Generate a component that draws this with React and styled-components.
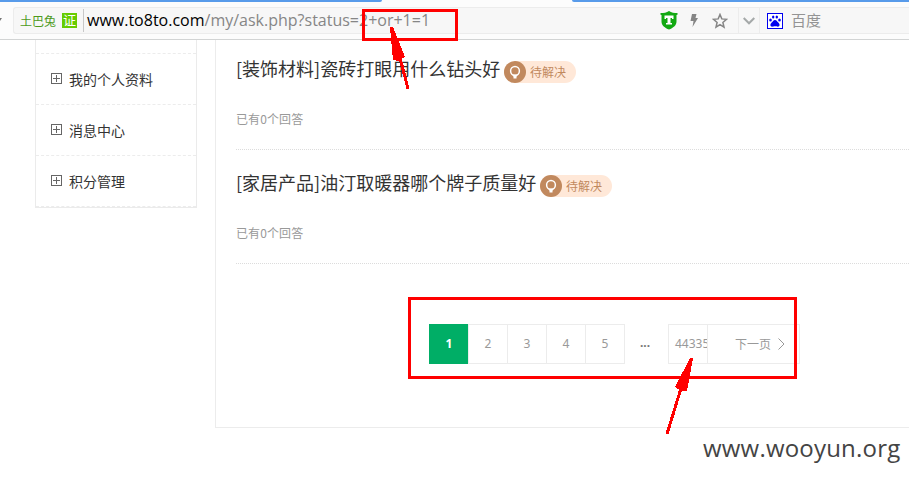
import React from "react";
import styled, { createGlobalStyle } from "styled-components";

const Global = createGlobalStyle`
  * { box-sizing: border-box; }
  html, body { margin: 0; background: #fff; overflow: hidden; }
  body { font-family: "Liberation Sans", "Noto Sans CJK SC", sans-serif; }
`;

const cjk = `"Noto Sans CJK SC", sans-serif`;
const latin = `"Open Sans", "Noto Sans", sans-serif`;

const Page = styled.div`
  position: relative;
  width: 909px;
  height: 477px;
  overflow: hidden;
  display: flex;
  flex-direction: column;
`;

const Browser = styled.header`
  flex: none;
  height: 40px;
  display: flex;
  flex-direction: column;
  background: #fcfcfc;
  border-bottom: 1px solid #d2d4d4;
`;

const Tabs = styled.div`
  height: 2px;
  display: flex;
  justify-content: space-between;
`;

const TabStrip = styled.div`
  width: ${(p) => p.$width}px;
  background: #589bea;
  border-radius: ${(p) => (p.$end ? "0 0 3px 0" : "0 0 0 3px")};
`;

const Tools = styled.div`
  display: flex;
  margin-top: 5px;
  height: 27px;
`;

const BackArrow = styled.div`
  width: 13px;
  padding-top: 10px;
  line-height: 0;
`;

const Address = styled.div`
  flex: 1;
  display: flex;
  align-items: center;
  background: #f7f7f7;
  border: 1px solid #ececec;
  border-right: 0;
  border-radius: 3px 0 0 3px;
`;

const SiteName = styled.span`
  width: 42px;
  margin-left: 6px;
  font: 12px/24px ${cjk};
  color: #4d9a1c;
`;

const Cert = styled.span`
  width: 15px;
  height: 15px;
  background: #66cc00;
  color: #fff;
  font: 13px/14px ${cjk};
  text-align: center;
`;

const Caret = styled.i`
  width: 1px;
  height: 23px;
  margin: 0 3px 0 6px;
  background: #c8c8c8;
`;

const Url = styled.span`
  flex: 1;
  font: 16px/25px ${latin};
  color: #868686;
  white-space: nowrap;
`;

const Host = styled.span`
  color: #000;
`;

const Icons = styled.div`
  display: flex;
  align-items: center;
  width: 78px;
`;

const Slot = styled.span`
  flex: none;
  display: flex;
  justify-content: center;
  width: ${(p) => p.$w}px;
`;

const Dropdown = styled.div`
  width: 22px;
  height: 25px;
  display: flex;
  align-items: center;
  justify-content: center;
  border: solid #ececec;
  border-width: 0 1px;
`;

const Engine = styled.div`
  width: 149px;
  display: flex;
  align-items: center;
  padding-left: 7px;
  gap: 8px;
  font: 15px/24px ${cjk};
  color: #949494;
  span { margin-top: -1px; }
`;

const Content = styled.main`
  flex: 1;
  min-height: 0;
  display: flex;
  align-items: flex-start;
  padding-left: 35px;
`;

const Sidebar = styled.nav`
  width: 162px;
  height: 168px;
  border: 1px solid #ebebeb;
  border-top: 0;
  padding-top: 13px;
`;

const MenuItem = styled.div`
  height: 51px;
  display: flex;
  align-items: center;
  gap: 7px;
  padding-left: 15px;
  border-top: 1px dashed #ececec;
  font: 14px/20px ${cjk};
  color: #333;
  svg { margin-top: -1px; }
  &:last-child { height: 52px; padding-bottom: 1px; border-bottom: 1px dashed #ececec; }
`;

const Panel = styled.section`
  flex: 1;
  height: 388px;
  margin-left: 18px;
  padding-left: 20px;
  border: solid #ececec;
  border-width: 0 0 1px 1px;
`;

const Question = styled.article`
  height: ${(p) => p.$h}px;
  padding-top: ${(p) => p.$top}px;
  border-bottom: 1px dotted #dcdcdc;
`;

const TitleRow = styled.div`
  display: flex;
  align-items: center;
  height: 24px;
`;

const Title = styled.h2`
  margin: -2px 0 0;
  width: ${(p) => p.$w}px;
  font: 400 18px/24px ${cjk};
  color: #333;
  white-space: nowrap;
`;

const Status = styled.span`
  display: flex;
  align-items: center;
  width: 72px;
  height: 22px;
  margin: 5px 0 0 4px;
  gap: 4px;
  border-radius: 11px;
  background: #ffe8d8;
  color: #c1895e;
  font: 12px/20px ${cjk};
`;

const Answers = styled.p`
  margin: 29px 0 0;
  font: 12px/18px ${cjk};
  letter-spacing: 0.1px;
  color: #999;
`;

const Pager = styled.div`
  display: flex;
  margin: 60px 0 0 193px;
  height: 40px;
  font: 12px/38px "Noto Sans", ${cjk};
  color: #999;
`;

const PageBox = styled.a`
  width: ${(p) => p.$w || 39}px;
  height: 40px;
  border: 1px solid ${(p) => (p.$active ? "#00ae66" : "#ececec")};
  border-right-width: ${(p) => (p.$last ? 1 : 0)}px;
  background: ${(p) => (p.$active ? "#00ae66" : "#fff")};
  color: ${(p) => (p.$active ? "#fff" : "#999")};
  font-weight: ${(p) => (p.$active ? 700 : 400)};
  text-align: center;
`;

const LastPage = styled(PageBox)`
  padding-left: 6px;
  text-align: left;
  overflow: hidden;
`;

const Next = styled(PageBox)`
  display: flex;
  align-items: center;
  gap: 7px;
  padding-left: 27px;
  font-family: ${cjk};
`;

const Dots = styled.span`
  width: 43px;
  padding-right: 3px;
  text-align: center;
  font-weight: 700;
  color: #777;
`;

const Watermark = styled.div`
  position: absolute;
  left: 703px;
  top: 431px;
  font: 24px/34px ${latin};
  letter-spacing: 0.2px;
  color: #444;
`;

const Markup = styled.svg`
  position: absolute;
  left: 0;
  top: 0;
  pointer-events: none;
`;

const Plus = () => (
  <svg width="11" height="11" shapeRendering="crispEdges" fill="none" stroke="#666">
    <path d="M.5.5h10v10H.5zM2 5.5h7M5.5 2v7" />
  </svg>
);

const Bulb = () => (
  <svg width="22" height="22">
    <circle cx="11" cy="11" r="11" fill="#c1895e" />
    <circle cx="11" cy="10" r="4.4" fill="none" stroke="#fff" strokeWidth="1.5" />
    <path d="M8.5 13.5h5l-1 2.5v1.5h-3V16z" fill="#fff" />
  </svg>
);

const Shield = () => (
  <svg width="18" height="19" viewBox="0 0 18 19">
    <path d="M9 0c2.5 1.7 5 2 8.5 2v1.7l-1 .3v6.5C16.500 14.500 13 17 9 18.500 5 17 1.500 14.500 1.500 10.500V4l-1-.3V2C4 2 6.500 1.700 9 0z" fill="#12a912" />
    <path d="M4.500 4.500h9v3.500H12V7h-1.500v5H12v1.500H6V12h1.500V7H6v1H4.500z" fill="#fff" />
  </svg>
);

const Bolt = () => (
  <svg width="8" height="13" viewBox="0 0 8 13">
    <path d="M2 0h4.500L5.500 4H8L2.500 13l1-6H.5z" fill="#858585" />
  </svg>
);

const Star = () => (
  <svg width="16" height="16" viewBox="0 0 16 16">
    <path d="M8 1.500l1.800 4.400 4.700.4-3.600 3.100 1.100 4.700L8 11.600l-4 2.500 1.100-4.700L1.500 6.300l4.700-.4z" fill="none" stroke="#858585" strokeWidth="1.500" />
  </svg>
);

const Paw = () => (
  <svg width="16" height="16" viewBox="0 0 16 16">
    <rect x=".5" y=".5" width="15" height="15" fill="#fff" stroke="#0000f0" />
    <g fill="#0000f0">
      <ellipse cx="3.500" cy="7" rx="1.300" ry="1.500" />
      <ellipse cx="6.200" cy="4" rx="1.200" ry="1.600" />
      <ellipse cx="9.800" cy="4" rx="1.200" ry="1.600" />
      <ellipse cx="12.500" cy="7" rx="1.300" ry="1.500" />
      <path d="M8 7c1.500 0 2 1.400 3.300 2.500 1.800 1.700 1.700 4.200-.5 4.200-1 0-1.600-.4-2.800-.4s-1.800.4-2.800.4c-2.200 0-2.300-2.500-.5-4.200C6 8.400 6.500 7 8 7z" />
    </g>
  </svg>
);

const questions = [
  { title: "[装饰材料]瓷砖打眼用什么钻头好", w: 264, h: 110, top: 17 },
  { title: "[家居产品]油汀取暖器哪个牌子质量好", w: 300, h: 114, top: 21 },
];

export default function App() {
  return (
    <Page>
      <Global />
      <Browser>
        <Tabs>
          <TabStrip $width={382} $end />
          <TabStrip $width={337} />
        </Tabs>
        <Tools>
          <BackArrow>
            <svg width="3" height="4"><path d="M0 0h2L0 3z" fill="#777" /></svg>
          </BackArrow>
          <Address>
            <SiteName>土巴兔</SiteName>
            <Cert>证</Cert>
            <Caret />
            <Url><Host>www.to8to.com</Host>/my/ask.php?status=2+or+1=1</Url>
            <Icons>
              <Slot $w={18}><Shield /></Slot>
              <Slot $w={31}><Bolt /></Slot>
              <Slot $w={22}><Star /></Slot>
            </Icons>
            <Dropdown>
              <svg width="12" height="8" fill="none" stroke="#a5a9a9" strokeWidth="2"><path d="M.7 1l5.300 5.300L11.300 1" /></svg>
            </Dropdown>
            <Engine><Paw /><span>百度</span></Engine>
          </Address>
        </Tools>
      </Browser>
      <Content>
        <Sidebar>
          {["我的个人资料", "消息中心", "积分管理"].map((t) => (
            <MenuItem key={t}><Plus />{t}</MenuItem>
          ))}
        </Sidebar>
        <Panel>
          {questions.map((q) => (
            <Question key={q.title} $h={q.h} $top={q.top}>
              <TitleRow>
                <Title $w={q.w}>{q.title}</Title>
                <Status><Bulb />待解决</Status>
              </TitleRow>
              <Answers>已有0个回答</Answers>
            </Question>
          ))}
          <Pager>
            <PageBox $active>1</PageBox>
            <PageBox>2</PageBox>
            <PageBox>3</PageBox>
            <PageBox>4</PageBox>
            <PageBox $w={40} $last>5</PageBox>
            <Dots>...</Dots>
            <LastPage>44335</LastPage>
            <Next $w={93} $last>
              下一页
              <svg width="7" height="12" fill="none" stroke="#999"><path d="M.5.5L6 6 .5 11.500" /></svg>
            </Next>
          </Pager>
        </Panel>
      </Content>
      <Watermark>www.wooyun.org</Watermark>
      <Markup width="909" height="477" shapeRendering="crispEdges" fill="none" stroke="#f00" strokeWidth="3">
        <path d="M363.500 10.500h93v29h-93zM409.500 298.500h386v79h-386z" />
        <path d="M398 50l10 39M682 385l-15 49" />
        <path d="M390 27h3l12 30-5 2-2 2-5-1z" fill="#f00" stroke="none" />
        <path d="M690 358h3l-6 33h-6l-6-4z" fill="#f00" stroke="none" />
      </Markup>
    </Page>
  );
}
